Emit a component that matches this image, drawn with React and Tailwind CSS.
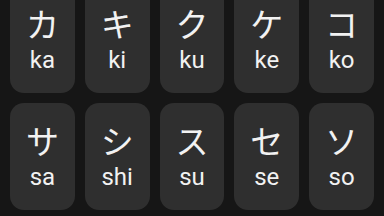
import React from 'react';

const rows = [
  [
    { kana: 'カ', romaji: 'ka' },
    { kana: 'キ', romaji: 'ki' },
    { kana: 'ク', romaji: 'ku' },
    { kana: 'ケ', romaji: 'ke' },
    { kana: 'コ', romaji: 'ko' },
  ],
  [
    { kana: 'サ', romaji: 'sa' },
    { kana: 'シ', romaji: 'shi' },
    { kana: 'ス', romaji: 'su' },
    { kana: 'セ', romaji: 'se' },
    { kana: 'ソ', romaji: 'so' },
  ],
];

const KanaCard = ({ kana, romaji }) => (
  <div className="h-[107px] rounded-[14px] bg-[#2f2f2f] flex flex-col items-center pt-[19px]">
    <span className="text-[33px] leading-[36px] text-[#f2f2f2] font-['Noto_Sans_CJK_JP',sans-serif]">
      {kana}
    </span>
    <span className="mt-[5px] text-[24px] leading-[28px] text-[#f2f2f2] font-['Roboto',sans-serif]">
      {romaji}
    </span>
  </div>
);

export default function App() {
  return (
    <div className="w-[384px] h-[216px] overflow-hidden bg-[#161616]">
      <div className="-mt-[14px] px-[10px] flex flex-col gap-[10px]">
        {rows.map((row, i) => (
          <div key={i} className="grid grid-cols-5 gap-[10px]">
            {row.map((k) => (
              <KanaCard key={k.romaji} {...k} />
            ))}
          </div>
        ))}
      </div>
    </div>
  );
}
